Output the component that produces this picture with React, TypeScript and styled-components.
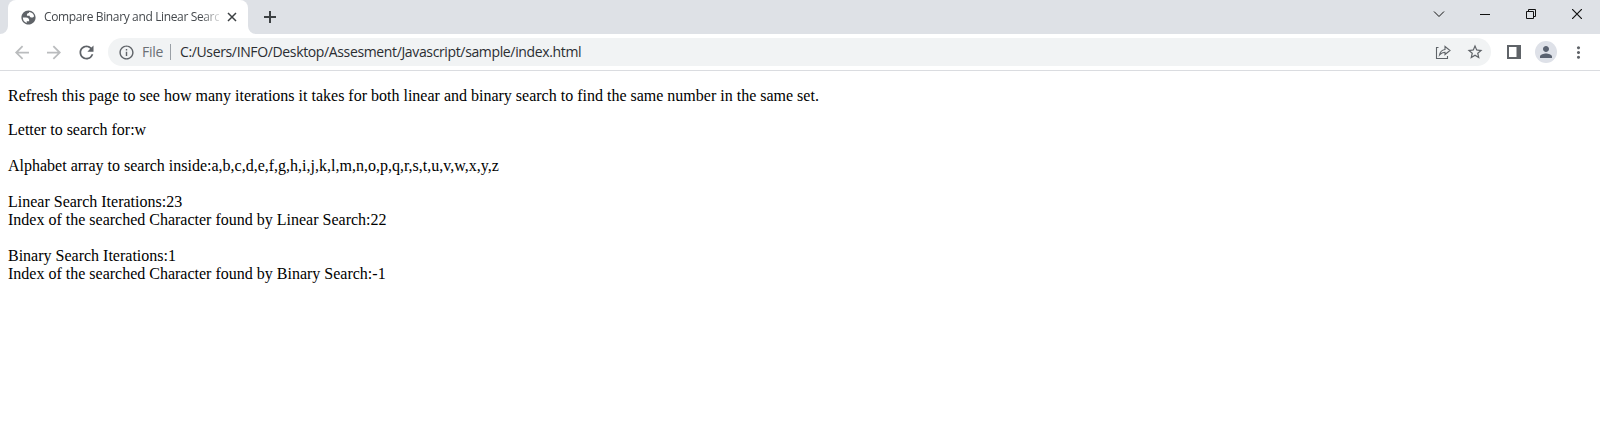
import React from "react";
import styled, { createGlobalStyle } from "styled-components";

const GlobalStyle = createGlobalStyle`
  body { margin: 0; background: #fff; overflow: hidden; }
`;

const Browser = styled.div`
  display: flex;
  flex-direction: column;
  height: 429px;
  font-family: "Open Sans", "Noto Sans", sans-serif;
`;

const TabStrip = styled.header`
  display: flex;
  height: 34px;
  background: #dee1e6;
`;

const Tab = styled.div`
  display: flex;
  align-items: center;
  box-sizing: border-box;
  width: 240px;
  height: 34px;
  padding: 0 11px 0 12px;
  background: #fff;
  border-radius: 8px 8px 0 0;
`;

const TabFoot = styled.svg<{ $flip?: boolean }>`
  align-self: flex-end;
  flex: none;
  width: 8px;
  height: 8px;
  transform: ${(p) => (p.$flip ? "scaleX(-1)" : "none")};
`;

const TabTitle = styled.span`
  flex: none;
  width: 175px;
  margin: 0 8px 0 7px;
  white-space: nowrap;
  font-size: 12px;
  line-height: 20px;
  letter-spacing: -0.36px;
  color: #45494d;
  mask-image: linear-gradient(to right, #000 157px, transparent 179px);
`;

const NewTab = styled.div`
  display: flex;
  align-items: center;
  margin-left: 8px;
`;

const WindowControls = styled.div`
  display: flex;
  height: 28px;
  margin-left: auto;
`;

const WindowButton = styled.div`
  display: flex;
  align-items: center;
  justify-content: center;
  width: 46px;
`;

const Toolbar = styled.div`
  display: flex;
  align-items: center;
  box-sizing: border-box;
  height: 37px;
  padding: 0 6px;
  border-bottom: 1px solid #dadce0;
`;

const ToolButton = styled.div`
  display: flex;
  align-items: center;
  justify-content: center;
  width: 32px;
  height: 28px;
`;

const Omnibox = styled.div`
  display: flex;
  align-items: center;
  flex: 1;
  height: 28px;
  margin: 0 7px 0 6px;
  padding-left: 10px;
  border-radius: 14px;
  background: #f1f3f4;
  font-size: 14px;
  line-height: 20px;
  white-space: nowrap;
`;

const Scheme = styled.span`
  margin-left: 7px;
  color: #6b6f74;
  letter-spacing: -0.3px;
`;

const Divider = styled.span`
  width: 1px;
  height: 16px;
  margin: 0 9px 0 7px;
  background: #9aa0a6;
`;

const Url = styled.span`
  flex: 1;
  color: #2b2e32;
  letter-spacing: -0.36px;
`;

const Avatar = styled.div`
  display: flex;
  align-items: center;
  justify-content: center;
  width: 22px;
  height: 22px;
  border-radius: 50%;
  background: #dee1e8;
`;

const Page = styled.main`
  padding: 16px 8px;
  font: 16px/18px "Liberation Serif", "Times New Roman", serif;
  color: #000;
`;

const Paragraph = styled.p`
  margin: 0 0 16px;
`;

const Result = styled.div`
  margin-bottom: 18px;
`;

const Line = styled.div`
  height: 18px;
  white-space: nowrap;
`;

type IconProps = { d: string; size: number; color?: string };
const Material = ({ d, size, color = "#5f6368" }: IconProps) => (
  <svg width={size} height={size} viewBox="0 0 24 24" fill={color}>
    <path d={d} />
  </svg>
);

const Stroke = ({ d, size, color = "#111", width = 1 }: IconProps & { width?: number }) => (
  <svg width={size} height={size} viewBox={`0 0 ${size} ${size}`} fill="none" stroke={color} strokeWidth={width}>
    <path d={d} />
  </svg>
);

const GLOBE =
  "M12 2C6.48 2 2 6.48 2 12s4.48 10 10 10 10-4.48 10-10S17.52 2 12 2zM4 12h4.400c3.407.022 4.922 1.730 4.543 5.127H9.488v2.470A8.004 8.004 0 0 1 4 12zm16 0c0-.660-.080-1.300-.230-1.910-.500 1.270-1.500 1.910-2.970 1.910-2.100 0-3.200-.900-3.200-2.600H9.800c-.300-2.600.600-3.900 2.800-3.900 0-.700.300-1.100.900-1.350A8 8 0 0 1 20 12z";
const BACK = "M19.4 11H7.230l5.590-5.590L11.4 4l-8 8 8 8 1.410-1.410L7.230 13H19.4v-2z";
const FORWARD = "M11.4 4l-1.410 1.410L15.570 11H3.4v2h12.170l-5.580 5.590L11.4 20l8-8z";
const RELOAD =
  "M17.650 6.350A7.958 7.958 0 0 0 12 4c-4.420 0-7.990 3.580-7.990 8s3.570 8 7.990 8c3.730 0 6.840-2.550 7.730-6h-2.080A5.990 5.990 0 0 1 12 18c-3.310 0-6-2.690-6-6s2.690-6 6-6c1.660 0 3.140.690 4.220 1.780L13 11h7V4l-2.350 2.350z";
const INFO =
  "M11 7h2v2h-2zm0 4h2v6h-2zm1-9C6.480 2 2 6.480 2 12s4.480 10 10 10 10-4.480 10-10S17.520 2 12 2zm0 18c-4.410 0-8-3.590-8-8s3.590-8 8-8 8 3.590 8 8-3.590 8-8 8z";
const STAR =
  "M22 9.240l-7.190-.620L12 2 9.190 8.630 2 9.240l5.460 4.730L5.820 21 12 17.270 18.180 21l-1.630-7.030L22 9.240zM12 15.400l-3.760 2.270 1-4.280-3.320-2.880 4.380-.380L12 6.100l1.710 4.040 4.380.380-3.320 2.880 1 4.280L12 15.400z";
const PERSON =
  "M12 12c2.210 0 4-1.790 4-4s-1.790-4-4-4-4 1.790-4 4 1.790 4 4 4zm0 2c-2.670 0-8 1.340-8 4v2h16v-2c0-2.660-5.330-4-8-4z";
const MORE =
  "M12 8c1.100 0 2-.900 2-2s-.900-2-2-2-2 .900-2 2 .900 2 2 2zm0 2c-1.100 0-2 .900-2 2s.900 2 2 2 2-.900 2-2-.900-2-2-2zm0 6c-1.100 0-2 .900-2 2s.900 2 2 2 2-.900 2-2-.900-2-2-2z";
const FOOT = "M8 0V8H0A8 8 0 0 0 8 0Z";

const alphabet = "abcdefghijklmnopqrstuvwxyz".split("").join(",");

export default function App() {
  return (
    <Browser>
      <GlobalStyle />
      <TabStrip>
        <TabFoot viewBox="0 0 8 8" fill="#fff"><path d={FOOT} /></TabFoot>
        <Tab>
          <Material d={GLOBE} size={17} />
          <TabTitle>Compare Binary and Linear Searc</TabTitle>
          <Stroke d="M1 1L9 9M9 1L1 9" size={10} color="#3c4043" width={1.5} />
        </Tab>
        <TabFoot $flip viewBox="0 0 8 8" fill="#fff"><path d={FOOT} /></TabFoot>
        <NewTab>
          <Stroke d="M6 0V12M0 6H12" size={12} color="#3c4043" width={2} />
        </NewTab>
        <WindowControls>
          <WindowButton><Stroke d="M1 3.500L6 8.500L11 3.500" size={12} /></WindowButton>
          <WindowButton><Stroke d="M0 5.500H10" size={10} /></WindowButton>
          <WindowButton><Stroke d="M.5 2.500H7.500V9.500H.5ZM2.500 2.500V.5H9.500V7.500H7.500" size={10} /></WindowButton>
          <WindowButton><Stroke d="M0 0L10 10M10 0L0 10" size={10} width={1.200} /></WindowButton>
        </WindowControls>
      </TabStrip>
      <Toolbar>
        <ToolButton><Material d={BACK} size={21} color="#babcbe" /></ToolButton>
        <ToolButton><Material d={FORWARD} size={21} color="#babcbe" /></ToolButton>
        <ToolButton><Material d={RELOAD} size={21} /></ToolButton>
        <Omnibox>
          <Material d={INFO} size={17} />
          <Scheme>File</Scheme>
          <Divider />
          <Url>C:/Users/INFO/Desktop/Assesment/Javascript/sample/index.html</Url>
          <ToolButton>
            <Stroke
              d="M3.500 3.500H1.500V14.500H12.500V12M4.500 11C5 8 7 6 10 5.500V2.500L15 6.500L10 10.500V8.300C7.500 8.300 6 9.200 4.500 11Z"
              size={16}
              color="#5f6368"
              width={1.100}
            />
          </ToolButton>
          <ToolButton><Material d={STAR} size={18} /></ToolButton>
        </Omnibox>
        <ToolButton><Stroke d="M1 1H13V13H1ZM10.500 1V13M12 1V13" size={14} color="#5f6368" width={2} /></ToolButton>
        <ToolButton><Avatar><Material d={PERSON} size={18} color="#5a6270" /></Avatar></ToolButton>
        <ToolButton><Material d={MORE} size={19} /></ToolButton>
      </Toolbar>
      <Page>
        <Paragraph>
          Refresh this page to see how many iterations it takes for both linear and binary search to find the same number in the same set.
        </Paragraph>
        <Result><Line>Letter to search for:w</Line></Result>
        <Result><Line>Alphabet array to search inside:{alphabet}</Line></Result>
        <Result>
          <Line>Linear Search Iterations:23</Line>
          <Line>Index of the searched Character found by Linear Search:22</Line>
        </Result>
        <Result>
          <Line>Binary Search Iterations:1</Line>
          <Line>Index of the searched Character found by Binary Search:-1</Line>
        </Result>
      </Page>
    </Browser>
  );
}
